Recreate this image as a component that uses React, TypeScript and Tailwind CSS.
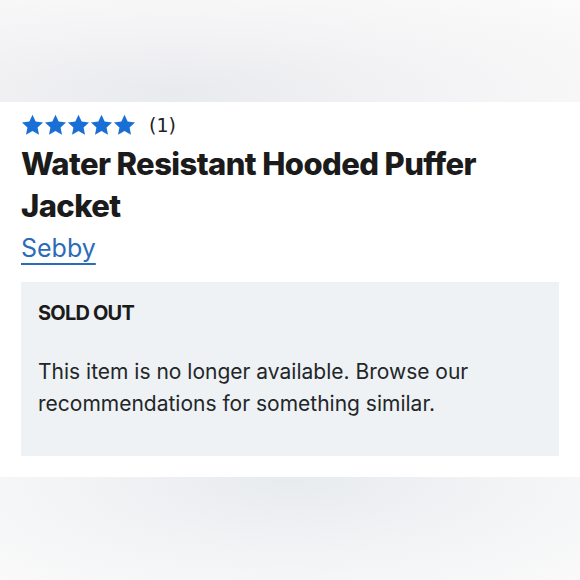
import React from "react";

function Star() {
  return (
    <svg width="23" height="22" viewBox="0 0 24 23" className="block">
      <path
        d="M12 0.8l3.3 7.1 7.7 0.9-5.7 5.3 1.5 7.6L12 17.9l-6.8 3.8 1.5-7.6L1 8.8l7.7-0.9z"
        fill="#1a6fd6"
      />
    </svg>
  );
}

export default function App() {
  return (
    <div className="w-[580px] h-[580px] flex flex-col bg-white overflow-hidden" style={{ fontFamily: "Inter, 'Noto Sans', sans-serif" }}>
      <div className="h-[102px] shrink-0 bg-[radial-gradient(ellipse_at_30%_90%,#e9eaee_0%,#f3f3f5_45%,#fbfbfb_100%)]" />
      <div className="flex-1 flex flex-col px-[21px] pt-[9px]">
        <div className="flex items-center gap-[13px]">
          <div className="flex gap-0">
            <Star />
            <Star />
            <Star />
            <Star />
            <Star />
          </div>
          <span className="text-[19px] text-[#222]" style={{ fontFamily: "'DejaVu Sans', sans-serif" }}>(1)</span>
        </div>
        <h1 className="mt-[3px] w-[500px] text-[31px] leading-[42px] font-extrabold tracking-[-0.6px] text-[#1b1b1b]">
          Water Resistant Hooded Puffer Jacket
        </h1>
        <a className="mt-[5px] self-start text-[25px] leading-[32px] text-[#2b6cb8] underline underline-offset-[6px] decoration-[1.5px]">
          Sebby
        </a>
        <div className="mt-[18px] w-[538px] h-[174px] bg-[#eef2f5] px-[17px] pt-[16px]">
          <div className="text-[20px] font-bold tracking-[-0.8px] text-[#1b1b1b]">SOLD OUT</div>
          <p className="mt-[28px] text-[21px] leading-[32px] text-[#232628]">
            This item is no longer available. Browse our recommendations for something similar.
          </p>
        </div>
      </div>
      <div className="h-[103px] shrink-0 bg-[radial-gradient(ellipse_at_50%_0%,#e8ebee_0%,#f1f3f5_50%,#fafafa_100%)]" />
    </div>
  );
}
